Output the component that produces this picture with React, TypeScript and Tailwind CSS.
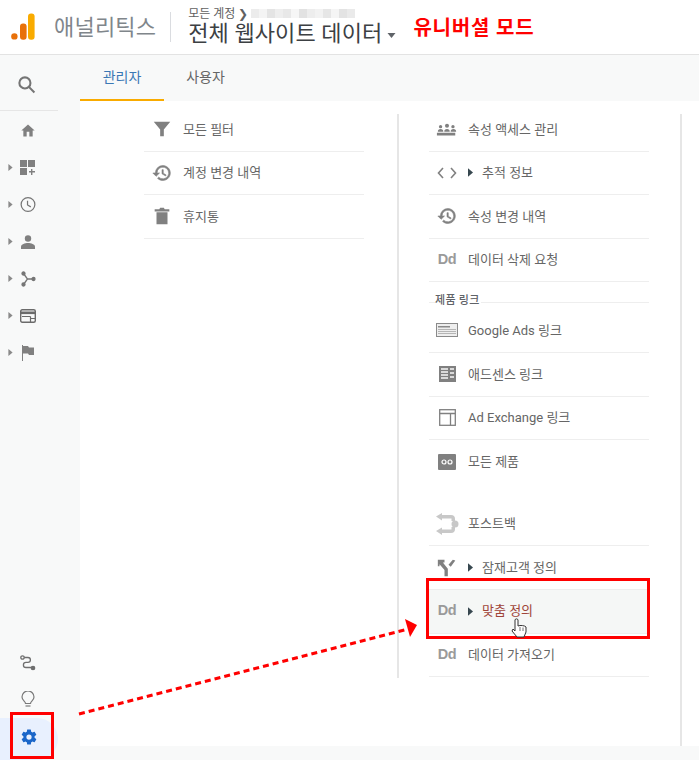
import type { ReactNode } from "react";

const FONT = "font-['Roboto','Noto_Sans_CJK_KR','Noto_Sans',sans-serif]";

// greys of the mosaic that hides the account name in the breadcrumb
const MOSAIC = ["#ececec", "#f4f4f4", "#e4e4e4", "#eeeeee", "#e8e8e8", "#f6f6f6", "#e2e2e2", "#ededed", "#f2f2f2", "#e6e6e6", "#f5f5f5", "#e3e3e3", "#eaeaea"];

// small solid triangle used by expandable rows
function Caret({ className = "" }: { className?: string }) {
  return (
    <svg width="5" height="9" viewBox="0 0 6 10" className={className}>
      <path d="M0 0 L6 5 L0 10 Z" fill="currentColor" />
    </svg>
  );
}

function Icon({ children, w = 24, h = 24, box = "0 0 24 24" }: { children: ReactNode; w?: number; h?: number; box?: string }) {
  return (
    <svg width={w} height={h} viewBox={box} fill="#808080">
      {children}
    </svg>
  );
}

const HISTORY =
  "M13 3a9 9 0 0 0-9 9H1l3.9 3.9.1.1L9 12H6a7 7 0 1 1 2.05 4.95L6.63 18.37A9 9 0 1 0 13 3zm-1 5v5l4.28 2.54.72-1.21-3.5-2.08V8H12z";

const DD = <span className="font-['Liberation_Sans',sans-serif] text-[14.500px] font-bold text-[#9a9a9a] tracking-[-0.3px]">Dd</span>;

const historyIcon = (
  <svg width="20" height="20" viewBox="0 0 24 24" fill="#808080" stroke="#808080" strokeWidth="0.700">
    <path d={HISTORY} />
  </svg>
);

function Row({ icon, label, caret, active, flat, tall }: { icon: ReactNode; label: string; caret?: boolean; active?: boolean; flat?: boolean; tall?: boolean }) {
  return (
    <div
      className={`flex items-center ${tall ? "h-[50px] pt-[6px]" : "h-[43.600px]"} ${flat ? "" : "border-b border-[#eeeeee]"} ${active ? "bg-[#f5f7f6]" : ""}`}
    >
      <div className="flex w-[39px] shrink-0 items-center justify-center pr-[3px]">{icon}</div>
      {caret && <Caret className="mr-[9px] text-[#37474f]" />}
      <span className={`text-[13px] ${active ? "text-[#a0453a]" : "text-[#666666]"}`}>{label}</span>
    </div>
  );
}

function NavItem({ children, caret = true }: { children: ReactNode; caret?: boolean }) {
  return (
    <div className="flex h-[37px] items-center">
      <div className="flex w-[20px] justify-end pr-[7px]">
        {caret && <Caret className="h-[7px] w-[5px] text-[#8a8a8a]" />}
      </div>
      <div className="flex w-[16px] items-center justify-center">{children}</div>
    </div>
  );
}

export default function App() {
  return (
    <div className={`${FONT} relative h-[760px] w-[699px] overflow-hidden bg-[#f8f9f9]`}>
      {/* top bar */}
      <header className="flex h-[55px] items-center border-b border-[#e3e3e3] bg-white">
        <svg width="24" height="28" viewBox="0 0 24 28" className="ml-[11px]">
          <circle cx="3.400" cy="23.400" r="3.200" fill="#e8710a" />
          <rect x="9" y="10.500" width="6.600" height="16.200" rx="3" fill="#e8710a" />
          <rect x="17" y="0.500" width="6.600" height="26.200" rx="3" fill="#f9ab00" />
        </svg>
        <span className="ml-[19px] text-[22px] tracking-[0.200px] text-[#80868b]">애널리틱스</span>
        <div className="ml-[14px] h-[30px] w-px bg-[#dadce0]" />
        <div className="ml-[17px] flex flex-col">
          <div className="flex h-[13px] items-center text-[12px] leading-none text-[#616161]">
            모든 계정 ❯
            <div className="ml-[3px] flex">
              {MOSAIC.map((c, i) => (
                <div key={i} className="h-[9px] w-[8px]" style={{ background: c }} />
              ))}
            </div>
          </div>
          <div className="mt-[1px] flex h-[26px] items-center text-[22px] leading-none tracking-[0.100px] text-[#3c4043]">
            전체 웹사이트 데이터
            <svg width="9" height="5" viewBox="0 0 8 5" className="ml-[5px] mt-[3px]">
              <path d="M0 0 L8 0 L4 5 Z" fill="#5f6368" />
            </svg>
          </div>
        </div>
        <span className="ml-[17px] mt-[1px] text-[20px] font-bold tracking-[0.800px] text-[#ff0000]">유니버셜 모드</span>
      </header>

      <div className="flex">
        {/* left rail */}
        <aside className="flex h-[705px] w-[80px] shrink-0 flex-col">
          <div className="flex h-[56px] w-[58px] items-center justify-center border-b border-[#e6e6e6] pr-[6px] pt-[4px]">
            <svg width="19" height="19" viewBox="0 0 24 24" fill="none" stroke="#757575" strokeWidth="2.600">
              <circle cx="10" cy="10" r="7" />
              <path d="M15 15 L22 22" />
            </svg>
          </div>
          <div className="mt-[1px] flex flex-col">
            <NavItem caret={false}>
              <Icon w={17} h={17}>
                <path d="M10 21v-7h4v7h5v-9h3L12 3 2 12h3v9z" />
              </Icon>
            </NavItem>
            <NavItem>
              <Icon w={16} h={16} box="0 0 16 16">
                <path d="M0 0h7v7H0zM8 0h7v7H8zM0 8h7v7H0zM11 9h1.400v2H15v1.400h-2.600V15H11v-2.600H9V11h2z" />
              </Icon>
            </NavItem>
            <NavItem>
              <svg width="17" height="17" viewBox="0 0 17 17" fill="none" stroke="#757575" strokeWidth="1.300">
                <circle cx="8.500" cy="8.500" r="7.300" />
                <path d="M8 4.500V9l3.500 2" />
              </svg>
            </NavItem>
            <NavItem>
              <Icon w={14} h={14} box="0 0 14 14">
                <circle cx="7" cy="3.500" r="3.200" />
                <path d="M0 14v-2.500C0 9.500 4 8 7 8s7 1.500 7 3.500V14z" />
              </Icon>
            </NavItem>
            <NavItem>
              <svg width="15" height="16" viewBox="0 0 15 16" fill="#757575" stroke="#757575" strokeWidth="1.300">
                <circle cx="2.500" cy="2.500" r="1.500" />
                <circle cx="2.500" cy="13.500" r="1.500" />
                <circle cx="12.500" cy="8" r="1.500" />
                <path d="M2.500 2.500 L6.500 8 L2.500 13.500 M6.500 8 H12.500" fill="none" />
              </svg>
            </NavItem>
            <NavItem>
              <svg width="16" height="14" viewBox="0 0 16 14" fill="none" stroke="#6b6b6b" strokeWidth="1.400">
                <rect x="0.700" y="0.700" width="14.600" height="12.600" rx="1.500" />
                <path d="M0.700 3.800H15.300" strokeWidth="2.600" />
                <path d="M2 7.500H10.500M10.500 7.500V13M10.500 9.500H15" strokeWidth="1.200" />
              </svg>
            </NavItem>
            <NavItem>
              <Icon w={14} h={16} box="0 0 14 16">
                <path d="M1 0h1v16H1zM2 1h5l1 1.500h5V10H8L7 8.500H2z" />
              </Icon>
            </NavItem>
          </div>
          <div className="mt-auto flex flex-col">
            <div className="flex h-[37px] items-center justify-center pr-[24px]">
              <svg width="16" height="16" viewBox="0 0 16 16" fill="none" stroke="#6f6f6f" strokeWidth="1.300">
                <circle cx="2.500" cy="2.500" r="1.700" />
                <circle cx="13" cy="13" r="1.700" fill="#6f6f6f" />
                <path d="M4.200 2.500H8a2.300 2.300 0 0 1 0 4.800H6a2.300 2.300 0 0 0 0 5.200h5.300" />
              </svg>
            </div>
            <div className="flex h-[37px] items-center justify-center pr-[24px]">
              <svg width="14" height="18" viewBox="0 0 14 18" fill="none" stroke="#7a7a7a" strokeWidth="1.200">
                <path d="M4.500 12.500C4.500 10.500 1 9.500 1 6a6 6 0 0 1 12 0c0 3.500-3.500 4.500-3.500 6.500z" />
                <path d="M4.500 15H9.500" />
              </svg>
            </div>
            <div className="flex h-[42px] w-[58px] items-center rounded-r-[21px] bg-[#e8f0fe] pb-[4px] pl-[20px]">
              <svg width="18" height="18" viewBox="0 0 24 24" fill="#1a66c9">
                <path d="M19.430 12.980c.04-.32.070-.64.070-.98s-.03-.66-.07-.98l2.110-1.650c.19-.15.240-.42.120-.64l-2-3.460c-.12-.22-.39-.3-.61-.22l-2.490 1c-.52-.4-1.080-.73-1.690-.98l-.38-2.650A.49.49 0 0 0 14 2h-4c-.25 0-.46.18-.49.420l-.38 2.650c-.61.25-1.170.59-1.690.98l-2.490-1a.5.5 0 0 0-.61.220l-2 3.460c-.13.220-.07.490.12.640l2.110 1.650c-.04.320-.07.650-.07.980s.03.660.07.980l-2.110 1.650c-.19.150-.24.420-.12.640l2 3.460c.12.220.39.300.61.220l2.490-1c.52.400 1.080.730 1.690.980l.38 2.650c.03.240.24.420.49.420h4c.25 0 .46-.18.490-.42l.38-2.650c.61-.25 1.170-.59 1.690-.98l2.490 1c.23.090.49 0 .61-.22l2-3.460c.12-.22.070-.49-.12-.64zM12 15.500a3.500 3.500 0 1 1 0-7 3.500 3.500 0 0 1 0 7z" />
              </svg>
            </div>
          </div>
        </aside>

        <div className="flex min-w-0 flex-1 flex-col">
          {/* tabs */}
          <nav className="flex h-[46px] items-center">
            <div className="flex h-[46px] w-[84px] items-center justify-center border-b-2 border-[#f9ab00] text-[14px] text-[#3b78b5]">
              관리자
            </div>
            <div className="flex h-[46px] w-[83px] items-center justify-center pb-[1px] text-[14px] text-[#666666]">
              사용자
            </div>
          </nav>

          {/* admin columns */}
          <main className="flex h-[645px] bg-white">
            <section className="ml-[64px] w-[220px] pt-[7px]">
              <Row icon={<Icon w={22} h={22}><path d="M3 4h18l-7 8.500V20h-4v-7.500z" /></Icon>} label="모든 필터" />
              <Row icon={historyIcon} label="계정 변경 내역" />
              <Row icon={<Icon w={22} h={22}><path d="M6 8h12v13H6zM4 4.500h5L10 3h4l1 1.500h5V7H4z" /></Icon>} label="휴지통" />
            </section>

            <div className="ml-[33px] mt-[13px] h-[564px] w-[2px] bg-[#e6e6e6]" />

            <section className="ml-[30px] w-[220px] pt-[7px]">
              <Row icon={<Icon w={22} h={22}><path d="M1 16h20v3H1zM2 15c0-2 1-3 3-3s3 1 3 3zM9 15c0-2 1-3 3-3s3 1 3 3zM16 15c0-2 1-3 3-3s3 1 3 3z" /><circle cx="5" cy="9.500" r="1.800" /><circle cx="12" cy="8.500" r="2.200" /><circle cx="18.500" cy="9.500" r="1.800" /></Icon>} label="속성 액세스 관리" />
              <Row caret icon={<svg width="20" height="14" viewBox="0 0 20 14" fill="none" stroke="#808080" strokeWidth="1.600"><path d="M6 2 L1.500 7 L6 12M14 2 L18.500 7 L14 12" /></svg>} label="추적 정보" />
              <Row icon={historyIcon} label="속성 변경 내역" />
              <Row icon={DD} label="데이터 삭제 요청" />

              <div className="relative h-[20.600px] border-b border-[#eeeeee]">
                <span className="absolute left-[6px] top-[11px] bg-white pr-[1px] text-[11px] font-medium leading-[16px] tracking-[0.300px] text-[#5f6368]">제품 링크</span>
              </div>

              <Row tall icon={<svg width="22" height="14" viewBox="0 0 22 14"><rect x="0.500" y="0.500" width="21" height="13" fill="#eeeeee" stroke="#8a8a8a" /><path d="M2 3h12v1.500H2z" fill="#8a8a8a" /><path d="M2 6h18v1H2zM2 8h18v1H2zM2 10h18v1H2z" fill="#b5b5b5" /></svg>} label="Google Ads 링크" />
              <Row icon={<svg width="17" height="16" viewBox="0 0 17 16"><rect width="17" height="16" fill="#808080" /><path d="M2 2h7v2H2zM2 5h7v2H2zM2 8h7v2H2zM2 11h7v2H2zM11 2h4v2h-4zM11 6h4v2h-4zM11 10h4v2h-4z" fill="#d9d9d9" /></svg>} label="애드센스 링크" />
              <Row icon={<svg width="17" height="17" viewBox="0 0 17 17" fill="none" stroke="#808080" strokeWidth="1.300"><rect x="0.700" y="0.700" width="15.600" height="15.600" /><path d="M0.700 4.500H16.300M11.500 4.500V16.300" /></svg>} label="Ad Exchange 링크" />
              <Row flat icon={<svg width="18" height="16" viewBox="0 0 18 16"><rect width="18" height="16" rx="1" fill="#808080" /><g fill="none" stroke="#ffffff" strokeWidth="1.200"><circle cx="6" cy="8" r="2" /><circle cx="12" cy="8" r="2" /></g></svg>} label="모든 제품" />

              <div className="h-[19px]" />

              <Row icon={<svg width="23" height="22" viewBox="0 0 23 22" fill="#c8c8c8"><path d="M0 3.500 L6 0V2H15a4 4 0 0 1 4 4V8H15.500V5.500H6V7.500z" /><path d="M0 18 L6 14.500V16.500H15.500V14H19V16a4 4 0 0 1-4 4H6V22z" /><circle cx="19" cy="11" r="3.500" /></svg>} label="포스트백" />
              <Row caret icon={<Icon w={20} h={20}><path d="M1 2h8v3.500H7L13 13v9H9v-7.500L3 7.500V10H1zM22 3l-5.500 7.500-2.700-2.400L19 2z" /></Icon>} label="잠재고객 정의" />
              <Row caret active icon={DD} label="맞춤 정의" />
              <Row icon={DD} label="데이터 가져오기" />
            </section>

            {/* right edge of the panel */}
            <div className="ml-[31px] mt-[13px] w-[2px] bg-[#e6e6e6]" />
          </main>
        </div>
      </div>

      {/* annotations drawn over the page */}
      <div className="absolute left-[10px] top-[712px] h-[47px] w-[44px] border-[3px] border-[#ff0000]" />
      <div className="absolute left-[426px] top-[578px] h-[61px] w-[224px] border-[3px] border-[#ff0000]" />
      <svg className="absolute left-0 top-0" width="699" height="760" viewBox="0 0 699 760" fill="none">
        <path d="M79 714 L408 629" stroke="#ff0000" strokeWidth="3" strokeDasharray="6 4" />
        <path d="M405 619 L417 625 L410 637 Z" fill="#ff0000" />
        <path d="M515 620 C515 618.500 518 618.500 518 620 V626 C520 625 525 625.500 526 627 V632 L524 637 H517 L512 631 L513 629 L515 631 Z" fill="#ffffff" stroke="#333333" strokeWidth="1" />
        <path d="M520 627V631M523 627.500V631" stroke="#333333" strokeWidth="0.700" />
      </svg>
    </div>
  );
}
